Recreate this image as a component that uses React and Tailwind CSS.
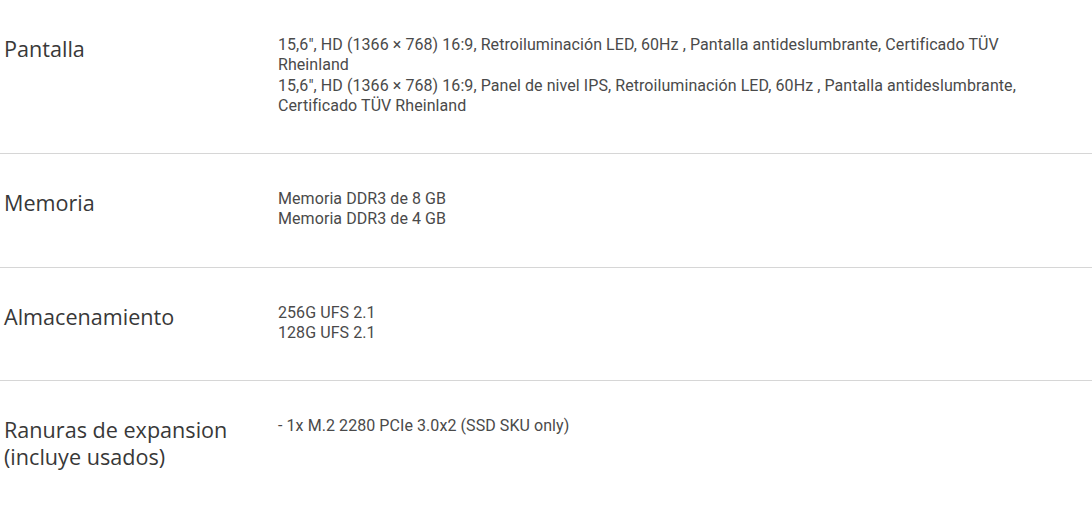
import React from 'react';

const specs = [
  {
    label: 'Pantalla',
    values: [
      '15,6", HD (1366 × 768) 16:9, Retroiluminación LED, 60Hz , Pantalla antideslumbrante, Certificado TÜV Rheinland',
      '15,6", HD (1366 × 768) 16:9, Panel de nivel IPS, Retroiluminación LED, 60Hz , Pantalla antideslumbrante, Certificado TÜV Rheinland',
    ],
  },
  { label: 'Memoria', values: ['Memoria DDR3 de 8 GB', 'Memoria DDR3 de 4 GB'] },
  { label: 'Almacenamiento', values: ['256G UFS 2.1', '128G UFS 2.1'] },
  { label: 'Ranuras de expansion (incluye usados)', values: ['- 1x M.2 2280 PCIe 3.0x2 (SSD SKU only)'] },
];

const App = () => {
  return (
    <div className="w-[1092px] min-h-[506px] bg-white">
      {specs.map((spec, i) => (
        <div
          key={spec.label}
          className={`flex pt-[35px] pb-[37px] ${i < specs.length - 1 ? 'border-b border-[#d6d6d6]' : ''}`}
        >
          <div
            className="w-[278px] shrink-0 pl-[4px] pr-[40px] text-[21.6px] leading-[27px] text-[#383838]"
            style={{ fontFamily: '"Open Sans", sans-serif' }}
          >
            {spec.label}
          </div>
          <div
            className="flex-1 pr-[40px] text-[16px] leading-[20.3px] tracking-[0.07px] text-[#4a4a4a]"
            style={{ fontFamily: 'Roboto, sans-serif' }}
          >
            {spec.values.map((v) => (
              <div key={v}>{v}</div>
            ))}
          </div>
        </div>
      ))}
    </div>
  );
};

export default App;
